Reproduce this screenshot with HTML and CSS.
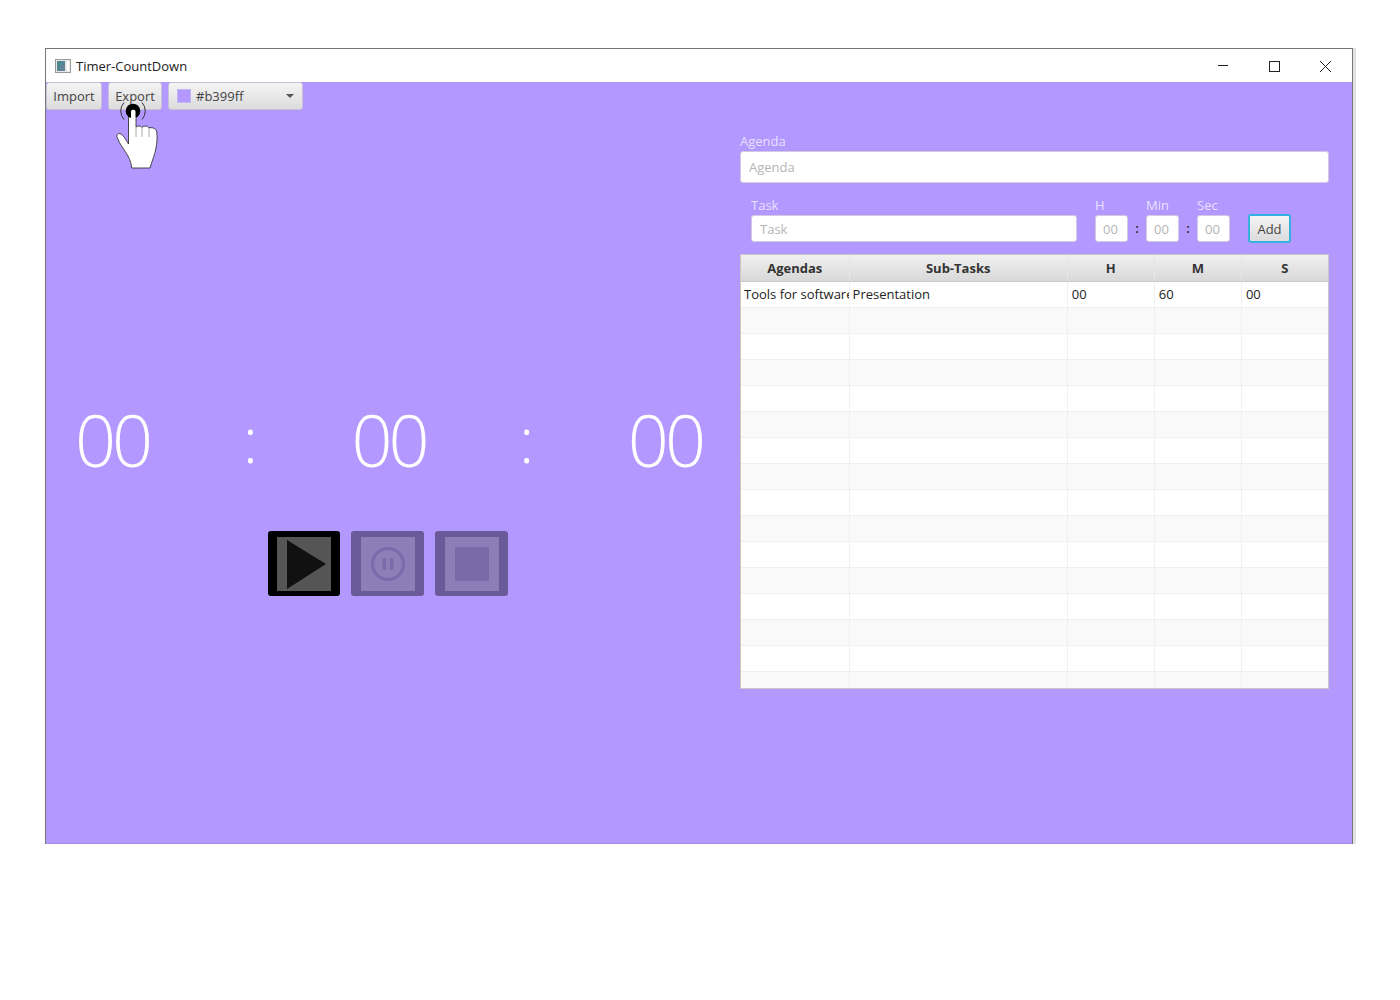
FILE: index.html
```html
<!DOCTYPE html>
<html lang="en">
<head>
    <meta charset="UTF-8">
    <meta name="viewport" content="width=device-width, initial-scale=1.0">
    <title>Timer-CountDown</title>
    <link rel="stylesheet" href="styles.css">
</head>
<body>
    <div class="window">
        <div class="titlebar">
            <svg class="app-icon" width="16" height="14" viewBox="0 0 16 14">
                <defs>
                    <linearGradient id="appFill" x1="0" y1="0" x2="1" y2="1">
                        <stop offset="0" stop-color="#3f8f8a"/>
                        <stop offset="1" stop-color="#6f7f9c"/>
                    </linearGradient>
                </defs>
                <rect x="0.5" y="0.5" width="15" height="13" fill="#e8e8e8" stroke="#9a9a9a"/>
                <rect x="2" y="2" width="8" height="10" fill="url(#appFill)"/>
                <rect x="12" y="2" width="2" height="10" fill="#fff"/>
            </svg>
            <span class="title-text">Timer-CountDown</span>
            <div class="win-controls">
                <svg width="12" height="12" viewBox="0 0 12 12"><path d="M1 5.5H11" stroke="#222" fill="none"/></svg>
                <svg width="12" height="12" viewBox="0 0 12 12"><rect x="1.5" y="1.5" width="10" height="10" stroke="#222" fill="none"/></svg>
                <svg width="12" height="12" viewBox="0 0 12 12"><path d="M1 1L12 12M12 1L1 12" stroke="#222" fill="none"/></svg>
            </div>
        </div>

        <div class="content">
            <div class="toolbar">
                <button class="btn btn-import">Import</button>
                <button class="btn btn-export">Export</button>
                <div class="btn color-picker">
                    <span class="swatch"></span>
                    <span class="color-name">#b399ff</span>
                    <span class="caret"></span>
                </div>
            </div>

            <div class="main">
                <div class="left">
                    <div class="timer">
                        <span class="digits">00</span>
                        <span class="sep">:</span>
                        <span class="digits">00</span>
                        <span class="sep">:</span>
                        <span class="digits">00</span>
                    </div>
                    <div class="controls">
                        <div class="ctrl ctrl-on">
                            <div class="ctrl-inner">
                                <svg width="54" height="54" viewBox="0 0 54 54"><polygon points="10,3 49,27 10,52" fill="#111"/></svg>
                            </div>
                        </div>
                        <div class="ctrl ctrl-off">
                            <div class="ctrl-inner">
                                <svg width="54" height="54" viewBox="0 0 54 54">
                                    <circle cx="27" cy="27" r="15.5" fill="none" stroke="#7c6aaa" stroke-width="3"/>
                                    <rect x="21.5" y="21" width="3.5" height="12" fill="#7c6aaa"/>
                                    <rect x="29" y="21" width="3.5" height="12" fill="#7c6aaa"/>
                                </svg>
                            </div>
                        </div>
                        <div class="ctrl ctrl-off">
                            <div class="ctrl-inner">
                                <span class="stop-square"></span>
                            </div>
                        </div>
                    </div>
                </div>

                <div class="right">
                    <label class="lbl">Agenda</label>
                    <input class="field agenda-input" type="text" placeholder="Agenda">

                    <div class="task-row">
                        <div class="task-col task-name">
                            <label class="lbl">Task</label>
                            <input class="field" type="text" placeholder="Task">
                        </div>
                        <div class="task-col task-time">
                            <label class="lbl">H</label>
                            <input class="field" type="text" placeholder="00">
                        </div>
                        <span class="colon">:</span>
                        <div class="task-col task-time">
                            <label class="lbl">Min</label>
                            <input class="field" type="text" placeholder="00">
                        </div>
                        <span class="colon">:</span>
                        <div class="task-col task-time">
                            <label class="lbl">Sec</label>
                            <input class="field" type="text" placeholder="00">
                        </div>
                        <button class="btn btn-add">Add</button>
                    </div>

                    <div class="table-wrap">
                        <table class="tasks">
                            <colgroup>
                                <col class="c-agenda"><col class="c-sub"><col class="c-num"><col class="c-num"><col class="c-num">
                            </colgroup>
                            <thead>
                                <tr><th>Agendas</th><th>Sub-Tasks</th><th>H</th><th>M</th><th>S</th></tr>
                            </thead>
                            <tbody>
                                <tr><td>Tools for software</td><td>Presentation</td><td>00</td><td>60</td><td>00</td></tr>
                                <tr><td></td><td></td><td></td><td></td><td></td></tr>
                                <tr><td></td><td></td><td></td><td></td><td></td></tr>
                                <tr><td></td><td></td><td></td><td></td><td></td></tr>
                                <tr><td></td><td></td><td></td><td></td><td></td></tr>
                                <tr><td></td><td></td><td></td><td></td><td></td></tr>
                                <tr><td></td><td></td><td></td><td></td><td></td></tr>
                                <tr><td></td><td></td><td></td><td></td><td></td></tr>
                                <tr><td></td><td></td><td></td><td></td><td></td></tr>
                                <tr><td></td><td></td><td></td><td></td><td></td></tr>
                                <tr><td></td><td></td><td></td><td></td><td></td></tr>
                                <tr><td></td><td></td><td></td><td></td><td></td></tr>
                                <tr><td></td><td></td><td></td><td></td><td></td></tr>
                                <tr><td></td><td></td><td></td><td></td><td></td></tr>
                                <tr><td></td><td></td><td></td><td></td><td></td></tr>
                                <tr><td></td><td></td><td></td><td></td><td></td></tr>
                            </tbody>
                        </table>
                    </div>
                </div>
            </div>

            <!-- mouse pointer from the screen recording -->
            <svg class="hand" width="48" height="72" viewBox="0 0 48 72">
                <path d="M11 3.5A12.7 12.7 0 0 0 11 20.5M29 3.5A12.7 12.7 0 0 1 29 20.5" fill="none" stroke="#333" stroke-width="1"/>
                <path d="M15.5 12C15.5 8 23 8 23 12V28C25 26.500 28 26.500 29 28.500C31 26.500 35 26.500 36 29C38 28 43.500 29 43.700 33C44.500 38 44 44 43 49C42 55 39 62 37 69H18.700C18 63 16.500 60 15 57C11 50 7 46 4.300 38.700C3 36 5 34 7 34.500C10 35.300 13 41 15.500 45Z" fill="#fff" stroke="#222" stroke-width="0.8"/>
                <path d="M23 28V38M29 28.500V38M36 29V38" fill="none" stroke="#888" stroke-width="0.7"/>
                <circle cx="20" cy="12" r="7.300" fill="#000"/>
                <path d="M18 20V12.500C18 10 22.500 10 22.500 12.500V20Z" fill="#fff"/>
            </svg>
        </div>
    </div>
</body>
</html>
```

FILE: styles.css
```css
* {
    box-sizing: border-box;
}

body {
    font-family: "Open Sans", "Noto Sans", sans-serif;
    background-color: #fff;
    margin: 0;
    padding: 48px 0 0 45px;
    font-size: 13px;
    color: #333;
}

.window {
    width: 1308px;
    height: 796px;
    border: 1px solid #777;
    border-bottom: none;
    box-shadow: 3px 0 0 #e2e2e2;
    display: flex;
    flex-direction: column;
}

.titlebar {
    height: 33px;
    background-color: #fff;
    display: flex;
    align-items: center;
    padding-left: 9px;
    flex: none;
}

.title-text {
    margin-left: 5px;
    color: #222;
}

.win-controls {
    margin-left: auto;
    display: flex;
    gap: 39px;
    padding-right: 21px;
}

.content {
    position: relative;
    flex: 1;
    background-color: #b399ff;
    border-bottom: 1px solid #a48ce8;
}

.toolbar {
    display: flex;
    height: 28px;
}

.btn {
    font-family: inherit;
    font-size: 13px;
    color: #444;
    height: 28px;
    padding: 0;
    border: 1px solid #c9c2d6;
    border-radius: 3px;
    background: linear-gradient(#f4f4f4, #dcdcdc);
    cursor: pointer;
}

.btn-import {
    width: 56px;
}

.btn-export {
    width: 54px;
    margin-left: 6px;
}

.color-picker {
    width: 135px;
    margin-left: 6px;
    display: flex;
    align-items: center;
    padding-left: 8px;
}

.swatch {
    width: 14px;
    height: 14px;
    background-color: #b399ff;
    border: 1px solid #c5b4f5;
}

.color-name {
    margin-left: 5px;
}

.caret {
    margin-left: auto;
    margin-right: 8px;
    border-left: 4.5px solid transparent;
    border-right: 4.5px solid transparent;
    border-top: 4px solid #555;
}

.main {
    display: flex;
    align-items: flex-start;
}

.left {
    width: 694px;
    flex: none;
}

.timer {
    display: flex;
    justify-content: space-between;
    align-items: center;
    height: 100px;
    margin-top: 279px;
    padding: 0 0 0 29px;
    width: 656px;
    color: #fff;
    font-weight: 300;
    font-size: 72px;
    line-height: 100px;
}

.digits {
    letter-spacing: -4px;
}

.sep {
    font-size: 62px;
}

.controls {
    display: flex;
    gap: 11px;
    margin: 42px 0 0 222px;
}

.ctrl {
    width: 73px;
    height: 65px;
    border-radius: 3px;
    display: flex;
    align-items: center;
    justify-content: center;
}

.ctrl-on {
    width: 72px;
    background-color: #000;
}

.ctrl-on .ctrl-inner {
    background-color: #555;
}

.ctrl-off {
    background-color: #6b5a99;
}

.ctrl-off .ctrl-inner {
    background-color: #8f7db8;
}

.ctrl-inner {
    width: 54px;
    height: 54px;
    display: flex;
    align-items: center;
    justify-content: center;
}

.stop-square {
    width: 34px;
    height: 34px;
    background-color: #7a69a6;
}

.right {
    width: 589px;
    flex: none;
    padding-top: 21px;
}

.lbl {
    display: block;
    height: 20px;
    line-height: 20px;
    color: rgba(255, 255, 255, 0.72);
}

.field {
    display: block;
    width: 100%;
    font-family: inherit;
    font-size: 13px;
    border: 1px solid #d2cbe0;
    border-radius: 3px;
    background-color: #fff;
    outline: none;
    padding: 0 8px;
}

.field::placeholder {
    color: #b5b5b5;
}

.agenda-input {
    height: 32px;
}

.task-row {
    display: flex;
    align-items: flex-end;
    height: 47px;
    margin-top: 12px;
    padding-left: 11px;
}

.task-col .lbl {
    height: 20px;
}

.task-col .field {
    height: 27px;
}

.task-name {
    width: 326px;
    margin-right: 18px;
}

.task-time {
    width: 33px;
}

.task-time .field {
    padding: 0 7px;
}

.colon {
    width: 18px;
    height: 27px;
    line-height: 27px;
    text-align: center;
    color: #222;
    font-weight: 600;
}

.btn-add {
    width: 43px;
    height: 29px;
    margin-left: 18px;
    margin-bottom: -1px;
    border: 2px solid #35b0e0;
}

.table-wrap {
    width: 589px;
    height: 435px;
    margin-top: 12px;
    border: 1px solid #c8c8c8;
    overflow: hidden;
    background-color: #f9f9f9;
}

.tasks {
    width: 588px;
    table-layout: fixed;
    border-collapse: collapse;
}

.c-agenda {
    width: 108px;
}

.c-sub {
    width: 218px;
}

.c-num {
    width: 87px;
}

.tasks th {
    height: 26px;
    padding: 0;
    font-size: 13px;
    font-weight: 700;
    color: #333;
    background: linear-gradient(#f0f0f0, #d8d8d8);
    border-right: 1px solid #e6e6e6;
    border-bottom: 1px solid #c8c8c8;
}

.tasks td {
    height: 26px;
    padding: 0 3px;
    color: #222;
    white-space: nowrap;
    overflow: hidden;
    border-right: 1px solid #f0f0f0;
    border-bottom: 1px solid #f0f0f0;
}

.tasks tbody tr:nth-child(odd) {
    background-color: #fff;
}

.tasks tbody tr:nth-child(even) {
    background-color: #f9f9f9;
}

.tasks td:nth-child(n+3) {
    padding-left: 4px;
}

.hand {
    position: absolute;
    left: 67px;
    top: 17px;
}
```
